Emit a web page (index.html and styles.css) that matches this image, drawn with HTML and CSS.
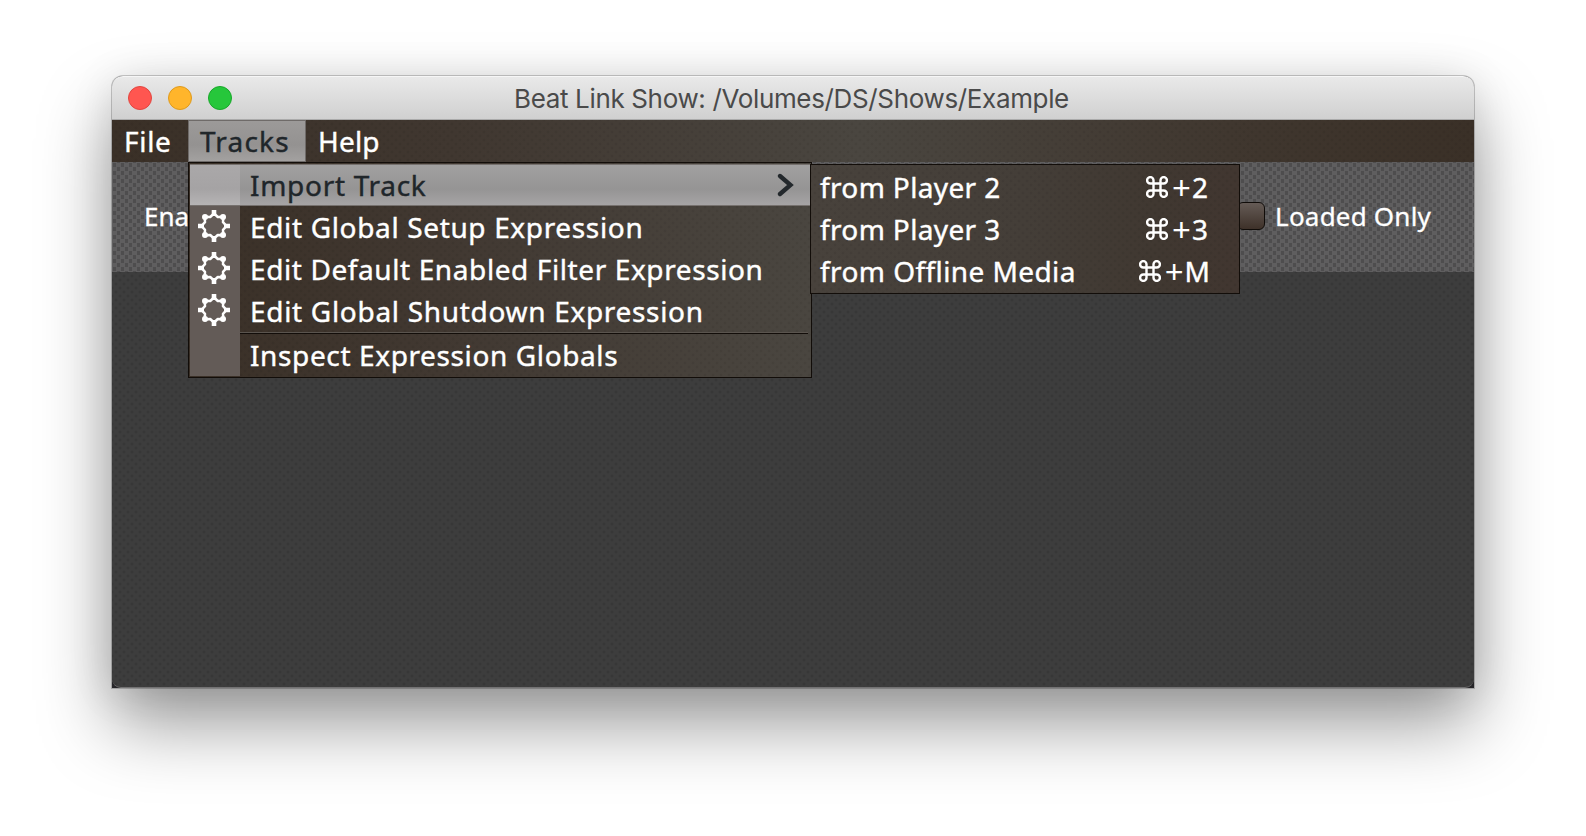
FILE: index.html
```html
<!DOCTYPE html>
<html lang="en">
<head>
<meta charset="utf-8">
<title>Beat Link Show: /Volumes/DS/Shows/Example</title>
<link rel="stylesheet" href="styles.css">
</head>
<body>
<svg class="defs" width="0" height="0" aria-hidden="true">
  <symbol id="gear" viewBox="0 0 32 32">
    <path d="M16 3.500L19.800 7L25.300 6.700L25 12.200L28.500 16L25 19.800L25.300 25.300L19.800 25L16 28.500L12.200 25L6.700 25.300L7 19.800L3.500 16L7 12.200L6.700 6.700L12.200 7Z" fill="none" stroke="#fff" stroke-width="2.500" stroke-linejoin="round"/>
    <path d="M16 0V6M16 26V32M0 16H6M26 16H32" stroke="#fff" stroke-width="4.600"/>
    <path d="M7 7h.01M25 7h.01M7 25h.01M25 25h.01" stroke="#fff" stroke-width="6" stroke-linecap="round"/>
  </symbol>
  <symbol id="cmd" viewBox="0 0 22 22">
    <path d="M7.500 7.500V4.300A3.200 3.200 0 1 0 4.300 7.500H17.700A3.200 3.200 0 1 0 14.500 4.300V17.700A3.200 3.200 0 1 0 17.700 14.500H4.300A3.200 3.200 0 1 0 7.500 17.700Z" fill="none" stroke="#fff" stroke-width="2.400"/>
  </symbol>
</svg>
<div class="window">
  <header class="titlebar">
    <div class="lights"><i class="light red"></i><i class="light amber"></i><i class="light green"></i></div>
    <h1 class="title">Beat Link Show: /Volumes/DS/Shows/Example</h1>
  </header>
  <nav class="menubar">
    <div class="tab file"><span>File</span></div>
    <div class="tab tracks"><span>Tracks</span></div>
    <div class="tab help"><span>Help</span></div>
    <div class="popup menu">
      <div class="row selected"><b class="gutter"></b><span class="t-import">Import Track</span>
        <svg class="arrow" width="18" height="24" viewBox="0 0 18 24"><path d="M3 3L13.500 12L3 21" fill="none" stroke="#23282c" stroke-width="4.300" stroke-linecap="round"/></svg></div>
      <div class="row"><b class="gutter"><svg class="gear"><use href="#gear"/></svg></b><span class="t-setup">Edit Global Setup Expression</span></div>
      <div class="row"><b class="gutter"><svg class="gear"><use href="#gear"/></svg></b><span class="t-filter">Edit Default Enabled Filter Expression</span></div>
      <div class="row"><b class="gutter"><svg class="gear"><use href="#gear"/></svg></b><span class="t-shut">Edit Global Shutdown Expression</span></div>
      <div class="separator"></div>
      <div class="row"><b class="gutter"></b><span class="t-inspect">Inspect Expression Globals</span></div>
    </div>
    <div class="popup submenu">
      <div class="row"><span class="t-player">from Player 2</span><kbd><svg class="cmd"><use href="#cmd"/></svg><span><span class="plus">+</span>2</span></kbd></div>
      <div class="row"><span class="t-player">from Player 3</span><kbd><svg class="cmd"><use href="#cmd"/></svg><span><span class="plus">+</span>3</span></kbd></div>
      <div class="row"><span class="t-media">from Offline Media</span><kbd class="wide"><svg class="cmd"><use href="#cmd"/></svg><span><span class="plus">+</span>M</span></kbd></div>
    </div>
  </nav>
  <div class="toolbar">
    <span class="enabled">Ena</span>
    <label class="loaded"><i class="checkbox"></i><span>Loaded Only</span></label>
  </div>
  <main class="content"></main>
</div>
</body>
</html>
```
FILE: styles.css
```css
body {
  margin: 0;
  width: 1586px;
  height: 836px;
  overflow: hidden;
  background: #fff;
  font-family: "Noto Sans", sans-serif;
  color: #fff;
}
.defs { position: absolute; }
.window {
  width: 1362px;
  margin: 76px 0 0 112px;
  border-radius: 11px 11px 0 0;
  background: #262528;
  box-shadow: 0 0 0 1px rgba(0,0,0,.2), 0 36px 72px rgba(0,0,0,.4), 0 4px 44px rgba(0,0,0,.1);
}
.titlebar {
  display: flex;
  align-items: center;
  height: 44px;
  box-sizing: border-box;
  border-top: 1px solid #f6f6f6;
  border-bottom: 1px solid #aaa;
  border-radius: 11px 11px 0 0;
  background: linear-gradient(#e9e9e9, #d0d0d0);
}
.lights { display: flex; gap: 16px; padding-left: 16px; width: 386px; box-sizing: border-box; }
.light { width: 24px; height: 24px; border-radius: 50%; box-sizing: border-box; }
.red { background: #ff5650; border: 1px solid #e2463f; }
.amber { background: #ffb52b; border: 1px solid #df9a1c; }
.green { background: #26c73b; border: 1px solid #18a82a; }
.title {
  margin: 0;
  padding: 2px 0 0 16px;
  font: 400 26px/30px Inter, sans-serif;
  color: #4a4a4a;
  white-space: nowrap;
  letter-spacing: -0.35px;
}
.menubar {
  position: relative;
  display: flex;
  height: 42px;
  -webkit-text-stroke: .4px;
  background:
    radial-gradient(circle, rgba(0,0,0,.06) 1px, transparent 1.8px) 0 0/8px 8px,
    radial-gradient(circle, rgba(0,0,0,.06) 1px, transparent 1.8px) 4px 4px/8px 8px,
    linear-gradient(90deg, #3a3027, #403730 25%, #4a4640 55%, #40372f 82%, #3a3027);
}
.tab { font-size: 28px; line-height: 42px; white-space: nowrap; box-sizing: border-box; }
.file { width: 76px; padding-left: 12px; letter-spacing: .7px; }
.tracks {
  width: 118px;
  padding-left: 11px;
  letter-spacing: 1.2px;
  color: #20262a;
  line-height: 40px;
  border: 1px solid #6f6b69;
  background: linear-gradient(#9c9a99, #949291 60%, #a3a1a0);
}
.help { padding-left: 12px; letter-spacing: .2px; }
.popup {
  position: absolute;
  box-sizing: border-box;
  border: 1px solid #120d09;
  font-size: 28px;
  background:
    radial-gradient(circle, rgba(0,0,0,.06) 1px, transparent 1.8px) 0 0/8px 8px,
    radial-gradient(circle, rgba(0,0,0,.06) 1px, transparent 1.8px) 4px 4px/8px 8px,
    linear-gradient(90deg, #3a3027, #413831 40%, #4a4640);
}
.menu { left: 76px; top: 42px; width: 624px; height: 216px; padding: 1px; }
.submenu {
  left: 698px; top: 44px; width: 430px; height: 130px; padding-top: 1px;
  background:
    radial-gradient(circle, rgba(0,0,0,.06) 1px, transparent 1.8px) 0 0/8px 8px,
    radial-gradient(circle, rgba(0,0,0,.06) 1px, transparent 1.8px) 4px 4px/8px 8px,
    linear-gradient(90deg, #48423c, #443e38 50%, #403831 80%, #413630);
}
.row { display: flex; align-items: center; height: 42px; line-height: 42px; white-space: nowrap; }
.gutter { flex: none; width: 50px; height: 42px; margin-right: 10px; background: #635b57; }
.gear { display: block; width: 32px; height: 32px; margin: 4px 0 0 8px; }
.t-import { letter-spacing: .7px; }
.t-setup { letter-spacing: .65px; }
.t-shut { letter-spacing: .69px; }
.t-filter { letter-spacing: .6px; }
.t-inspect { letter-spacing: .62px; }
.t-player { letter-spacing: .36px; }
.t-media { letter-spacing: .42px; }
.selected {
  color: #20262a;
  box-sizing: border-box;
  border-top: 1px solid #76716e;
  border-bottom: 1px solid #76716e;
  background: linear-gradient(#a1a0a0, #959494 60%, #a6a4a5);
}
.selected .gutter { height: 40px; background: linear-gradient(#aaa8a9, #a5a3a4 60%, #b6b4b5); }
.arrow { margin-left: auto; margin-right: 15px; }
.separator {
  height: 1px;
  margin: 0 2px 0 50px;
  border-top: 1px solid #5a544e;
  background: #120d09;
  box-shadow: -50px 0 0 #635b57;
}
.submenu .row { padding: 0 31px 0 9px; justify-content: space-between; }
.submenu kbd { font: inherit; display: flex; align-items: center; gap: 4px; }
.submenu .wide { margin-right: -2px; }
.plus { font-size: 33px; line-height: 0; vertical-align: -2px; margin-right: 1px; -webkit-text-stroke: 0; }
.cmd { width: 22px; height: 22px; }
.toolbar {
  display: flex;
  align-items: center;
  justify-content: space-between;
  height: 110px;
  box-sizing: border-box;
  padding: 0 43px 2px 32px;
  font-size: 26px;
  -webkit-text-stroke: .3px;
  background:
    conic-gradient(from 0deg at 3px 4px, transparent 270deg, #4e4d4e 0) 1px 1px/8px 8px,
    conic-gradient(from 0deg at 3px 4px, transparent 270deg, #4e4d4e 0) 5px 5px/8px 8px,
    #5f5e5f;
}
.loaded { display: flex; align-items: center; letter-spacing: .2px; }
.checkbox {
  width: 28px; height: 28px; box-sizing: border-box; margin-right: 10px;
  border: 1px solid #100c09; border-radius: 6px;
  background: linear-gradient(#655b56, #3e3129);
}
.content {
  height: 416px;
  border-bottom: 1px solid #737273;
  border-radius: 0 0 9px 9px;
  box-sizing: border-box;
  background:
    radial-gradient(circle, rgba(0,0,0,.1) 1px, transparent 1.9px) 0 0/8px 8px,
    radial-gradient(circle, rgba(0,0,0,.1) 1px, transparent 1.9px) 4px 4px/8px 8px,
    #3d3d3d;
}
```
